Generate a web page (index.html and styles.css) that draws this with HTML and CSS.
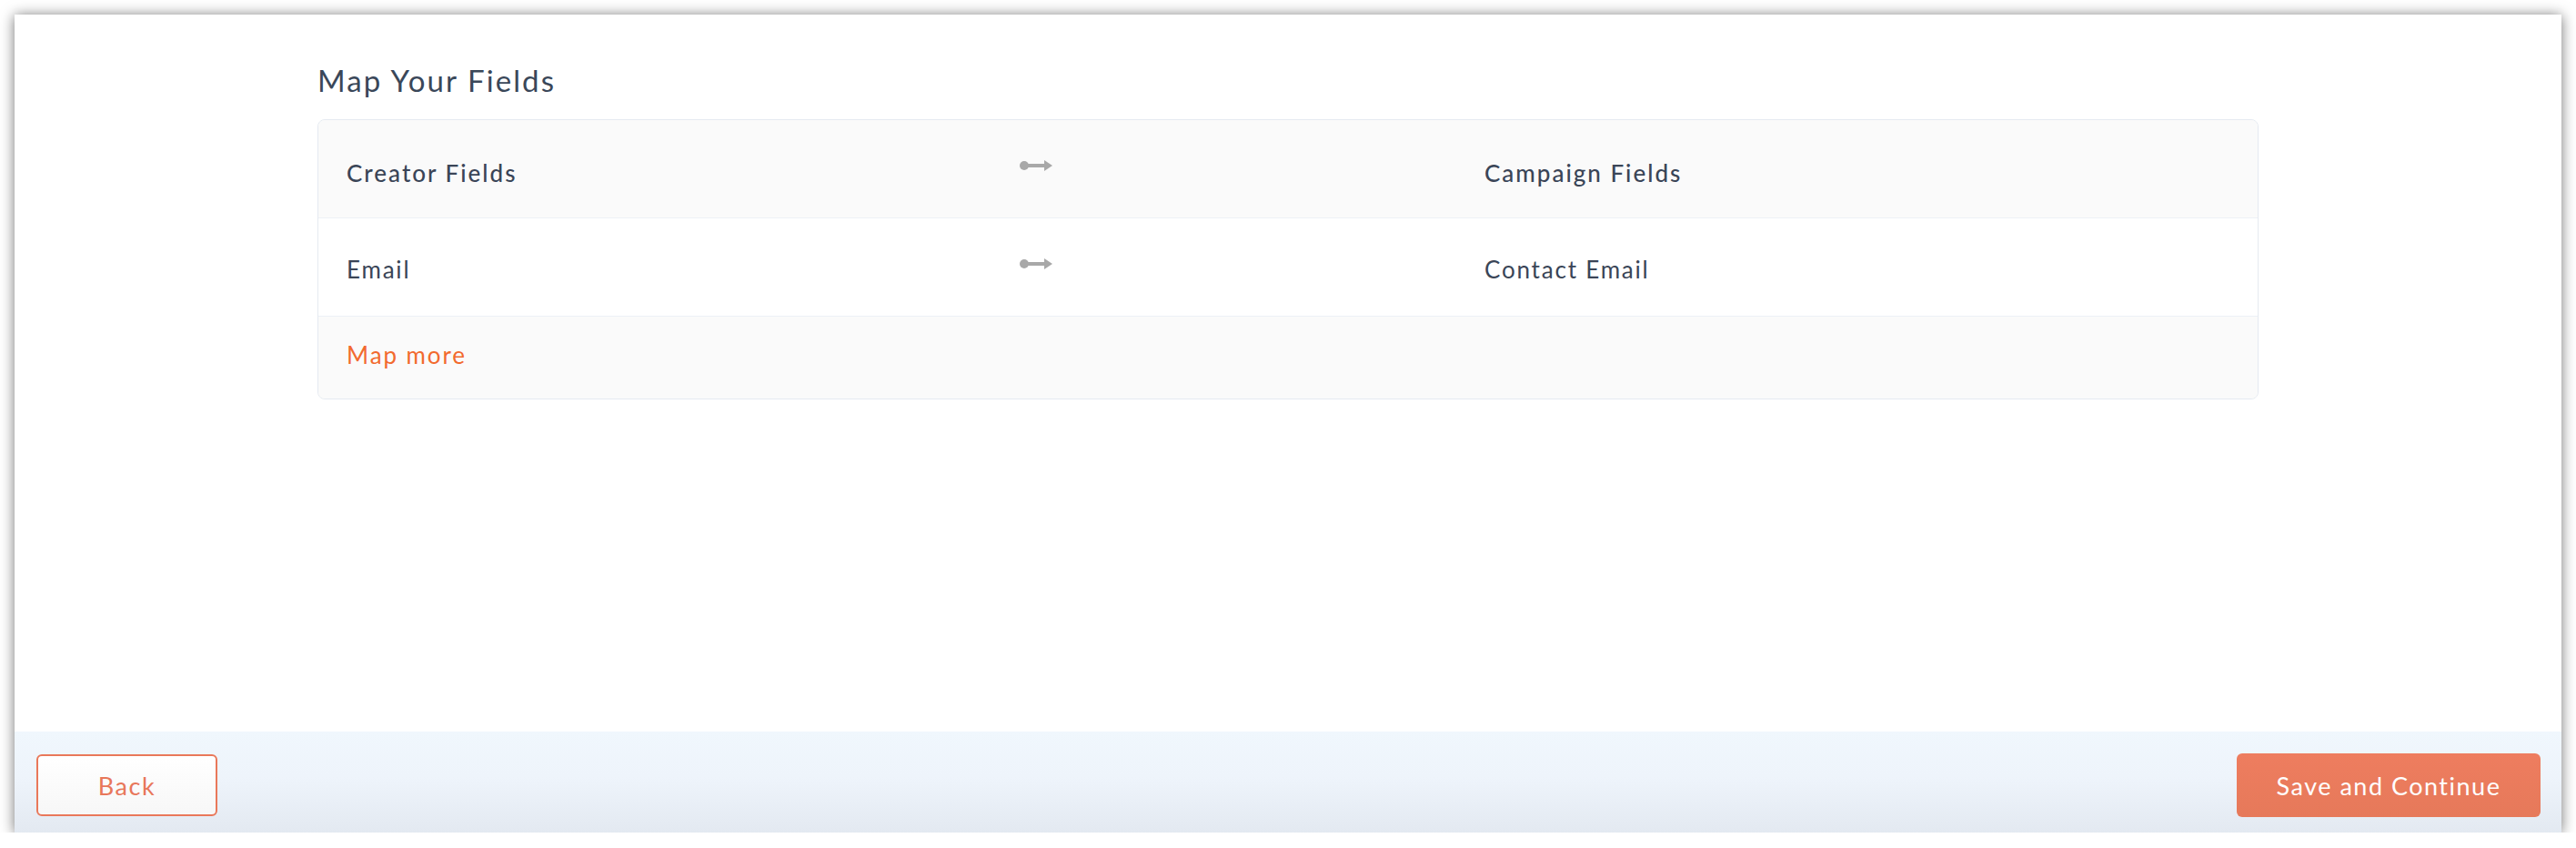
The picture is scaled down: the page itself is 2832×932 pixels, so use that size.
FILE: index.html
```html
<!DOCTYPE html>
<html lang="en">
<head>
<meta charset="utf-8">
<title>Map Your Fields</title>
<link rel="stylesheet" href="styles.css">
</head>
<body>
<div class="window">
  <main class="content">
    <div class="container">
      <h2 class="title">Map Your Fields</h2>
      <div class="card">
        <div class="row row-head">
          <div class="cell cell-head">Creator Fields</div>
          <div class="cell-arrow">
            <svg width="36" height="12" viewBox="0 0 36 12"><circle cx="5" cy="6" r="5" fill="#a8a8a8"/><rect x="5" y="4" width="23" height="4" fill="#a8a8a8"/><polygon points="27,0 36,6 27,12" fill="#a8a8a8"/></svg>
          </div>
          <div class="cell cell-head">Campaign Fields</div>
        </div>
        <div class="row row-body">
          <div class="cell">Email</div>
          <div class="cell-arrow">
            <svg width="36" height="12" viewBox="0 0 36 12"><circle cx="5" cy="6" r="5" fill="#a8a8a8"/><rect x="5" y="4" width="23" height="4" fill="#a8a8a8"/><polygon points="27,0 36,6 27,12" fill="#a8a8a8"/></svg>
          </div>
          <div class="cell">Contact Email</div>
        </div>
        <div class="row-more">
          <a class="map-more" href="#">Map more</a>
        </div>
      </div>
    </div>
  </main>
  <footer class="footer">
    <button class="btn btn-back" type="button">Back</button>
    <button class="btn btn-save" type="button">Save and Continue</button>
  </footer>
</div>
</body>
</html>
```

FILE: styles.css
```css
* { box-sizing: border-box; }

html, body {
  margin: 0;
  padding: 0;
  background: #ffffff;
  font-family: "Lato", "Liberation Sans", sans-serif;
}

.window {
  margin: 16px 16px 0 16px;
  width: 2800px;
  height: 899px;
  background: #ffffff;
  display: flex;
  flex-direction: column;
  box-shadow: 0 1px 14px rgba(0, 0, 0, 0.55);
}

.content {
  flex: 1;
  padding-top: 53px;
}

.container {
  width: 2134px;
  margin: 0 auto;
}

.title {
  margin: 0 0 22px 0;
  font-size: 33px;
  font-weight: 400;
  line-height: 1.2;
  color: #3a4759;
  letter-spacing: 2.1px;
}

.card {
  border: 1px solid #e5eaf1;
  border-radius: 8px;
  overflow: hidden;
  background: #fafafa;
}

.row {
  display: grid;
  grid-template-columns: 740px 511px 1fr;
  align-items: start;
  padding: 0 31px;
  height: 108px;
  border-bottom: 1px solid #edf1f6;
}

.row-head {
  padding-top: 44px;
  background: #fafafa;
}

.row-body {
  padding-top: 42px;
  background: #ffffff;
}

.cell {
  font-size: 26px;
  line-height: 1.15;
  color: #3a4557;
  letter-spacing: 1.8px;
}

.cell-head {
  font-weight: 500;
  letter-spacing: 2px;
}

.cell-arrow svg {
  display: block;
}

.row-body .cell-arrow svg {
  margin-top: 2px;
}

.row-more {
  height: 90px;
  padding: 28px 31px 0 31px;
  background: #fafafa;
}

.map-more {
  font-size: 26px;
  line-height: 1.15;
  color: #f26a2e;
  text-decoration: none;
  letter-spacing: 1.9px;
}

.footer {
  height: 111px;
  display: flex;
  justify-content: space-between;
  align-items: flex-start;
  padding: 24px 23px 0 24px;
  background: linear-gradient(to bottom, #f0f7fd 0%, #eef4fb 45%, #e3e9f1 100%);
}

.btn {
  font-family: "Lato", "Liberation Sans", sans-serif;
  font-size: 27px;
  height: 70px;
  border-radius: 6px;
  cursor: pointer;
  letter-spacing: 1.5px;
}

.btn-back {
  width: 199px;
  height: 68px;
  margin-top: 1px;
  border: 2px solid #e9785a;
  color: #e8775a;
  background: linear-gradient(to bottom, #ffffff, #f7f7f7);
}

.btn-save {
  width: 334px;
  border: none;
  color: #ffffff;
  background: linear-gradient(to bottom, #ee7d5f, #e6795a);
}
```
